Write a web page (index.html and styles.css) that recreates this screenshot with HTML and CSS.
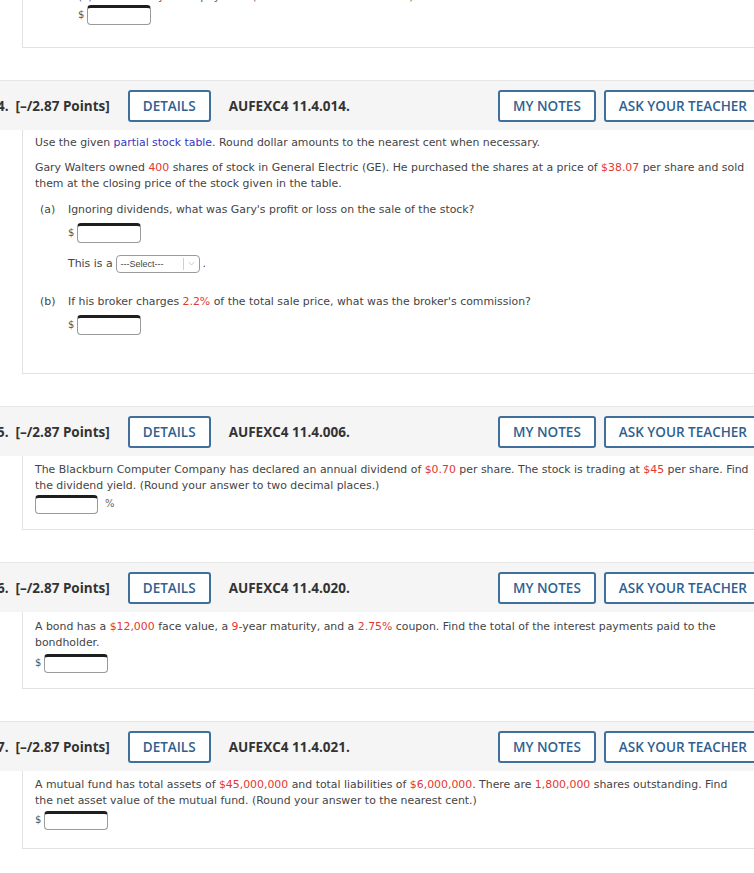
FILE: index.html
```html
<!DOCTYPE html>
<html>
<head>
<meta charset="utf-8">
<link rel="stylesheet" href="styles.css">
</head>
<body>
<div class="page">
  <div class="qbody top-body">
    <p class="cut">(c) The monthly lease payment (rounded to the nearest cent)</p>
    <div class="ans"><span class="dollar">$</span><span class="inp"></span></div>
  </div>

  <section class="q">
    <div class="qhead">
      <span class="num">4.</span><span class="pts">[–/2.87 Points]</span>
      <span class="btn details">DETAILS</span>
      <span class="code">AUFEXC4 11.4.014.</span>
      <span class="spacer"></span>
      <span class="btn">MY NOTES</span>
      <span class="btn ask">ASK YOUR TEACHER</span>
    </div>
    <div class="qbody b4">
      <p>Use the given <span class="link">partial stock table</span>. Round dollar amounts to the nearest cent when necessary.</p>
      <p class="p2">Gary Walters owned <span class="red">400</span> shares of stock in General Electric (GE). He purchased the shares at a price of <span class="red">$38.07</span> per share and sold<br>them at the closing price of the stock given in the table.</p>
      <div class="part pa">
        <span class="lbl">(a)</span>
        <div class="pc">
          <p>Ignoring dividends, what was Gary's profit or loss on the sale of the stock?</p>
          <div class="ans"><span class="dollar">$</span><span class="inp"></span></div>
          <div class="selrow">This is a <span class="sel"><span class="seltxt">---Select---</span><span class="selarr"><svg width="7" height="5" viewBox="0 0 7 5"><path d="M0.5 0.8 L3.5 4 L6.5 0.8" fill="none" stroke="#c8c8c8" stroke-width="0.9"/></svg></span></span> .</div>
        </div>
      </div>
      <div class="part pb">
        <span class="lbl">(b)</span>
        <div class="pc">
          <p>If his broker charges <span class="red">2.2%</span> of the total sale price, what was the broker's commission?</p>
          <div class="ans"><span class="dollar">$</span><span class="inp"></span></div>
        </div>
      </div>
    </div>
  </section>

  <section class="q">
    <div class="qhead">
      <span class="num">5.</span><span class="pts">[–/2.87 Points]</span>
      <span class="btn details">DETAILS</span>
      <span class="code">AUFEXC4 11.4.006.</span>
      <span class="spacer"></span>
      <span class="btn">MY NOTES</span>
      <span class="btn ask">ASK YOUR TEACHER</span>
    </div>
    <div class="qbody b5">
      <p>The Blackburn Computer Company has declared an annual dividend of <span class="red">$0.70</span> per share. The stock is trading at <span class="red">$45</span> per share. Find<br>the dividend yield. (Round your answer to two decimal places.)</p>
      <div class="ans pct"><span class="inp"></span><span class="unit">%</span></div>
    </div>
  </section>

  <section class="q">
    <div class="qhead">
      <span class="num">6.</span><span class="pts">[–/2.87 Points]</span>
      <span class="btn details">DETAILS</span>
      <span class="code">AUFEXC4 11.4.020.</span>
      <span class="spacer"></span>
      <span class="btn">MY NOTES</span>
      <span class="btn ask">ASK YOUR TEACHER</span>
    </div>
    <div class="qbody b6">
      <p>A bond has a <span class="red">$12,000</span> face value, a <span class="red">9</span>-year maturity, and a <span class="red">2.75%</span> coupon. Find the total of the interest payments paid to the<br>bondholder.</p>
      <div class="ans"><span class="dollar">$</span><span class="inp"></span></div>
    </div>
  </section>

  <section class="q">
    <div class="qhead">
      <span class="num">7.</span><span class="pts">[–/2.87 Points]</span>
      <span class="btn details">DETAILS</span>
      <span class="code">AUFEXC4 11.4.021.</span>
      <span class="spacer"></span>
      <span class="btn">MY NOTES</span>
      <span class="btn ask">ASK YOUR TEACHER</span>
    </div>
    <div class="qbody b7">
      <p>A mutual fund has total assets of <span class="red">$45,000,000</span> and total liabilities of <span class="red">$6,000,000</span>. There are <span class="red">1,800,000</span> shares outstanding. Find<br>the net asset value of the mutual fund. (Round your answer to the nearest cent.)</p>
      <div class="ans"><span class="dollar">$</span><span class="inp"></span></div>
    </div>
  </section>
</div>
</body>
</html>
```

FILE: styles.css
```css
html, body {
  margin: 0;
  padding: 0;
  background: #ffffff;
  overflow: hidden;
}
body {
  width: 754px;
  height: 873px;
}
.page {
  width: 790px;
  margin-left: -3px;
  margin-top: -11px;
  font-family: "DejaVu Sans", Verdana, sans-serif;
  font-size: 10.9px;
  line-height: 16px;
  color: #444;
}
p {
  margin: 0;
  white-space: nowrap;
}
.red { color: #e2372f; }
.link { color: #3636c4; }

.qbody {
  margin-left: 25px;
  border-left: 1px solid #e2e2e2;
  border-bottom: 1px solid #e2e2e2;
  padding-left: 12px;
}
.top-body {
  padding-left: 55px;
  padding-bottom: 22px;
}
.cut { color: #555; }

.ans {
  display: flex;
  align-items: center;
  gap: 3px;
  height: 20px;
}
.dollar {
  font-size: 10px;
  color: #555;
}
.inp {
  display: block;
  box-sizing: border-box;
  width: 64px;
  height: 20px;
  background: #fff;
  border: 1px solid #9a9a9a;
  border-top: 3px solid #1e1e1e;
  border-radius: 4px;
}

.q { margin-top: 32px; }

.qhead {
  box-sizing: border-box;
  height: 50px;
  background: #f5f5f5;
  border-top: 1px solid #e6e6e6;
  display: flex;
  align-items: center;
  font-family: "Open Sans", sans-serif;
  font-weight: 700;
  font-size: 13.5px;
  color: #333;
  padding-right: 25px;
}
.num { margin-right: 7px; }
.btn {
  box-sizing: border-box;
  height: 32px;
  display: flex;
  align-items: center;
  padding: 0 13px;
  border: 2px solid #3f6f9a;
  border-radius: 3px;
  background: #fff;
  color: #2f6190;
  font-weight: 600;
  font-size: 13.5px;
  letter-spacing: 0;
}
.details { margin-left: 18px; }
.code { margin-left: 18px; }
.spacer { flex: 1; }
.ask { margin-left: 8px; }

.b4 { padding-top: 5px; padding-bottom: 38px; }
.b4 .p2 { margin-top: 9px; }
.part {
  display: flex;
  margin-left: 5px;
}
.lbl { width: 28px; flex: none; }
.pa { margin-top: 10px; }
.pb { margin-top: 22px; }
.pc .ans { margin-top: 5px; }
.selrow {
  margin-top: 12px;
  display: flex;
  align-items: center;
  gap: 3px;
  height: 17px;
}
.sel {
  box-sizing: border-box;
  display: flex;
  align-items: center;
  width: 84px;
  height: 18px;
  border: 1px solid #9a9a9a;
  border-radius: 4px;
  background: #fff;
  font-family: "Liberation Sans", Arial, sans-serif;
  font-size: 9px;
  color: #444;
}
.seltxt {
  flex: 1;
  padding-left: 4px;
}
.selarr {
  width: 15px;
  height: 12px;
  border-left: 1px solid #cfcfcf;
  display: flex;
  align-items: center;
  justify-content: center;
}

.b5 { padding-top: 6px; padding-bottom: 15px; }
.b5 .ans { margin-top: 0; }
.pct .inp { width: 63px; height: 19px; }
.unit { font-size: 10px; color: #666; margin-left: 4px; }

.b6 { padding-top: 7px; padding-bottom: 15px; }
.b6 .ans { margin-top: 2px; }
.b6 .inp, .b7 .inp { height: 19px; }

.b7 { padding-top: 6px; padding-bottom: 18px; }
.b7 .ans { margin-top: 1px; }
```
